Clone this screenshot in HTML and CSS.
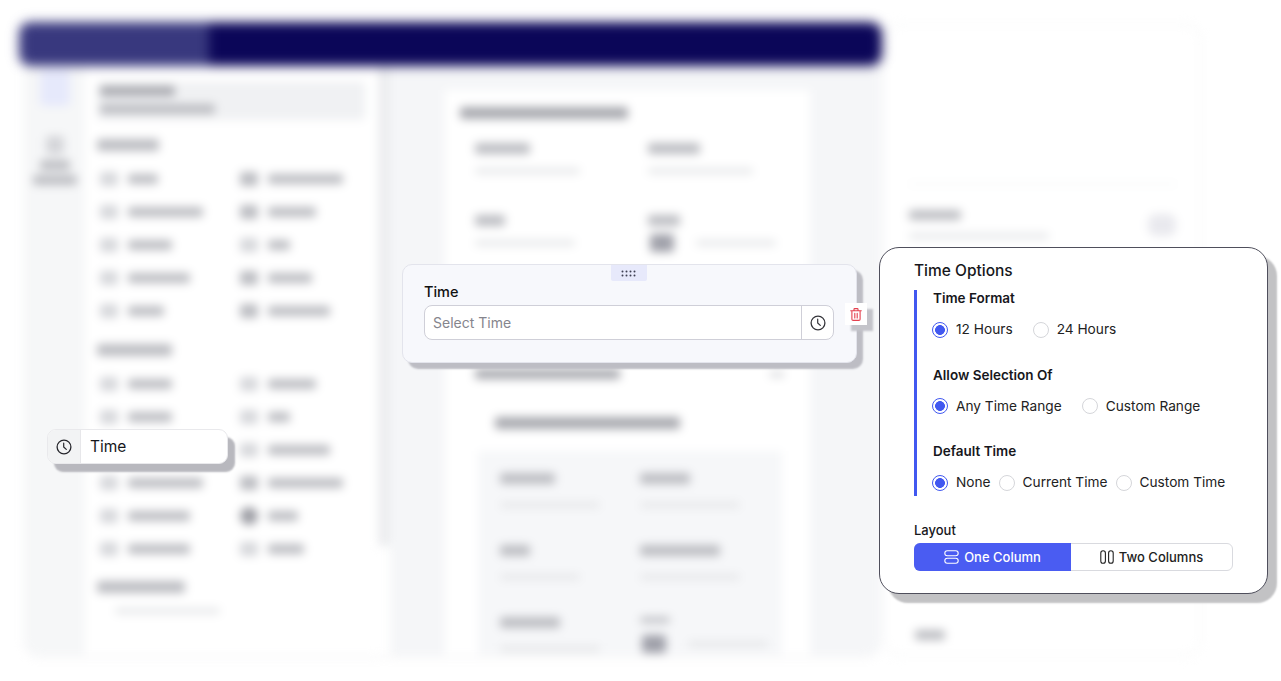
FILE: index.html
```html
<!DOCTYPE html>
<html lang="en">
<head>
<meta charset="utf-8">
<title>Time field</title>
<link rel="stylesheet" href="styles.css">
</head>
<body>
<svg class="defs" width="0" height="0" aria-hidden="true">
  <symbol id="clock" viewBox="0 0 16 16">
    <circle cx="8" cy="8" r="6.9" fill="none" stroke="currentColor" stroke-width="1.3"/>
    <path d="M7.7 4.2V8l2.6 2.4" fill="none" stroke="currentColor" stroke-width="1.2" stroke-linecap="round" stroke-linejoin="round"/>
  </symbol>
</svg>
<main class="stage">
  <div class="backdrop" aria-hidden="true">
    <div class="builder">
      <div class="topbar"><div class="topbar-brand"></div></div>
      <div class="workspace">
        <div class="rail">
          <div class="rail-top"></div>
          <div class="rail-icon"></div>
          <div class="bar w-30 rail-bar"></div>
          <div class="bar w-44 rail-bar2"></div>
        </div>
        <div class="palette">
          <div class="picked"><div class="bar dark w-75"></div><div class="bar w-115"></div></div>
          <div class="bar sec sec-first w-62"></div>
          <div class="rows">
            <div class="row"><i class="ic"></i><div class="bar w-30"></div></div>
            <div class="row"><i class="ic dk"></i><div class="bar w-75"></div></div>
            <div class="row"><i class="ic"></i><div class="bar w-75"></div></div>
            <div class="row"><i class="ic dk"></i><div class="bar w-48"></div></div>
            <div class="row"><i class="ic"></i><div class="bar w-44"></div></div>
            <div class="row"><i class="ic"></i><div class="bar w-22"></div></div>
            <div class="row"><i class="ic"></i><div class="bar w-62"></div></div>
            <div class="row"><i class="ic dk"></i><div class="bar w-44"></div></div>
            <div class="row"><i class="ic"></i><div class="bar w-36"></div></div>
            <div class="row"><i class="ic dk"></i><div class="bar w-62"></div></div>
          </div>
          <div class="bar sec w-75"></div>
          <div class="rows rows-b">
            <div class="row"><i class="ic"></i><div class="bar w-44"></div></div>
            <div class="row"><i class="ic"></i><div class="bar w-48"></div></div>
            <div class="row"><i class="ic"></i><div class="bar w-44"></div></div>
            <div class="row"><i class="ic"></i><div class="bar w-22"></div></div>
            <div class="row"><i class="ic"></i><div class="bar w-48"></div></div>
            <div class="row"><i class="ic"></i><div class="bar w-62"></div></div>
            <div class="row"><i class="ic"></i><div class="bar w-75"></div></div>
            <div class="row"><i class="ic dk"></i><div class="bar w-75"></div></div>
            <div class="row"><i class="ic"></i><div class="bar w-62"></div></div>
            <div class="row"><i class="ic round"></i><div class="bar w-30"></div></div>
            <div class="row"><i class="ic"></i><div class="bar w-62"></div></div>
            <div class="row"><i class="ic"></i><div class="bar w-36"></div></div>
          </div>
          <div class="bar sec sec-last w-88"></div>
          <div class="bar faint w-105 palette-foot"></div>
        </div>
        <div class="scroll"></div>
        <div class="canvas">
          <div class="form">
            <div class="bar dark form-title"></div>
            <div class="fields">
              <div class="field"><div class="bar w-55"></div><div class="bar faint w-105"></div></div>
              <div class="field"><div class="bar w-52"></div><div class="bar faint w-105"></div></div>
              <div class="field"><div class="bar w-30"></div><div class="bar faint w-100"></div></div>
              <div class="field"><div class="bar w-32"></div><div class="photo"><i></i><div class="bar faint w-80"></div></div></div>
            </div>
            <div class="section-head"><div class="bar dark w-145"></div><div class="chev"></div></div>
            <div class="bar dark sub-head"></div>
            <div class="inner">
              <div class="field"><div class="bar w-55"></div><div class="bar faint w-100"></div></div>
              <div class="field"><div class="bar w-50"></div><div class="bar faint w-100"></div></div>
              <div class="field"><div class="bar w-30"></div><div class="bar faint w-80"></div></div>
              <div class="field"><div class="bar w-80"></div><div class="bar faint w-100"></div></div>
              <div class="field"><div class="bar w-60"></div><div class="bar faint w-100"></div></div>
              <div class="field"><div class="bar w-30"></div><div class="photo"><i></i><div class="bar faint w-80"></div></div></div>
            </div>
          </div>
        </div>
      </div>
    </div>
    <div class="props">
      <div class="prop-rule"></div>
      <div class="prop-item">
        <div class="prop-text"><div class="bar w-52"></div><div class="bar faint w-140"></div></div>
        <div class="prop-toggle"></div>
      </div>
      <div class="prop-foot"><div class="bar w-30"></div></div>
    </div>
  </div>

  <div class="chip">
    <span class="chip-icon"><svg class="ico-16"><use href="#clock"/></svg></span>
    <span class="chip-label">Time</span>
  </div>

  <section class="field-card">
    <div class="handle">
      <svg width="16" height="7" viewBox="0 0 16 7" fill="#3d3f52">
        <circle cx="1.5" cy="1.5" r="1"/><circle cx="5.5" cy="1.5" r="1"/><circle cx="9.5" cy="1.5" r="1"/><circle cx="13.5" cy="1.5" r="1"/>
        <circle cx="1.5" cy="5.5" r="1"/><circle cx="5.5" cy="5.5" r="1"/><circle cx="9.5" cy="5.5" r="1"/><circle cx="13.5" cy="5.5" r="1"/>
      </svg>
    </div>
    <div class="card-label">Time</div>
    <div class="time-input">
      <span class="placeholder">Select Time</span>
      <span class="input-icon"><svg class="ico-16"><use href="#clock"/></svg></span>
    </div>
  </section>
  <div class="trash">
    <svg width="12" height="13" viewBox="0 0 12 13" fill="none" stroke="#e4414f" stroke-width="1.1" stroke-linecap="round" stroke-linejoin="round">
      <path d="M.7 2.7h10.6M4 2.6V1.2c0-.3.2-.6.6-.6h2.8c.4 0 .6.3.6.6v1.4M1.9 2.9v8.3c0 .7.5 1.2 1.2 1.2h5.8c.7 0 1.2-.5 1.2-1.2V2.9M4.8 5.4v4.6M7.2 5.4v4.6"/>
    </svg>
  </div>

  <aside class="options">
    <h2 class="opt-title">Time Options</h2>
    <div class="opt-groups">
      <div class="group">
        <h3 class="group-title">Time Format</h3>
        <div class="radios">
          <span class="radio on"></span><span class="r-text gap-wide">12 Hours</span>
          <span class="radio"></span><span class="r-text">24 Hours</span>
        </div>
      </div>
      <div class="group">
        <h3 class="group-title">Allow Selection Of</h3>
        <div class="radios">
          <span class="radio on"></span><span class="r-text gap-wide">Any Time Range</span>
          <span class="radio"></span><span class="r-text">Custom Range</span>
        </div>
      </div>
      <div class="group">
        <h3 class="group-title">Default Time</h3>
        <div class="radios">
          <span class="radio on"></span><span class="r-text gap-tight">None</span>
          <span class="radio"></span><span class="r-text gap-tight">Current Time</span>
          <span class="radio"></span><span class="r-text">Custom Time</span>
        </div>
      </div>
    </div>
    <div class="layout-label">Layout</div>
    <div class="segments">
      <div class="seg seg-on">
        <svg width="15" height="14" viewBox="0 0 15 14" fill="none" stroke="currentColor" stroke-width="1.1"><rect x=".8" y=".8" width="13.4" height="5" rx="2.5"/><rect x=".8" y="8.2" width="13.4" height="5" rx="2.5"/></svg>
        <span>One Column</span>
      </div>
      <div class="seg">
        <svg width="14" height="14" viewBox="0 0 14 14" fill="none" stroke="currentColor" stroke-width="1.1"><rect x=".8" y=".8" width="4.6" height="12.4" rx="2.3"/><rect x="8.6" y=".8" width="4.6" height="12.4" rx="2.3"/></svg>
        <span>Two Columns</span>
      </div>
    </div>
  </aside>
</main>
</body>
</html>
```
FILE: styles.css
```css
* { box-sizing: border-box; }
html, body { margin: 0; padding: 0; background: #fff; }
body { font-family: Inter, "Noto Sans", "Liberation Sans", sans-serif; color: #17171c; overflow: hidden; }
.defs { position: absolute; }
.stage { position: relative; width: 1281px; height: 681px; overflow: hidden; background: #fff; }

/* blurred application behind the overlays */
.backdrop { position: absolute; inset: 0; display: flex; align-items: flex-start; padding: 22px 0 0 25px; filter: blur(5px); }
.builder { width: 855px; height: 633px; display: flex; flex-direction: column; }
.topbar { height: 44px; margin-left: -6px; margin-right: -2px; flex: none; background: #0b0658; border-radius: 12px; overflow: hidden; filter: blur(3px); }
.topbar-brand { width: 190px; height: 100%; background: #38387e; }
.workspace { flex: 1; display: flex; min-height: 0; border-radius: 0 0 14px 14px; overflow: hidden; box-shadow: 0 2px 6px rgba(40, 40, 60, .05); }
.rail { width: 60px; flex: none; background: #f6f7f8; display: flex; flex-direction: column; align-items: center; padding-top: 4px; }
.rail-top { width: 30px; height: 36px; background: #e6e9fb; border-radius: 4px; }
.rail-icon { width: 18px; height: 18px; margin-top: 30px; background: #d4d5d9; border-radius: 3px; }
.rail-bar { margin-top: 6px; height: 7px; }
.rail-bar2 { margin-top: 5px; height: 7px; }
.palette { width: 293px; flex: none; background: #fff; padding: 16px 13px 0 12px; }
.picked { height: 38px; background: #f0f1f3; border-radius: 4px; padding: 4px 3px; display: flex; flex-direction: column; gap: 8px; }
.bar { height: 10px; background: #bcbdc2; border-radius: 3px; }
.bar.dark { background: #a8a9af; }
.bar.faint { height: 6px; background: #e6e7e9; }
.sec { height: 12px; margin-top: 17px; }
.sec-first { margin-top: 19px; }
.sec-last { margin-top: 16px; }
.rows { margin-top: 11px; display: grid; grid-template-columns: 140px 1fr; grid-auto-rows: 33px; }
.row { display: flex; align-items: center; gap: 10px; padding-left: 3px; }
.ic { width: 18px; height: 14px; background: #d6d7db; border-radius: 3px; flex: none; }
.ic.dk { background: #bbbcc1; }
.ic.round { height: 18px; border-radius: 50%; background: #9c9da4; }
.palette-foot { margin-top: 15px; margin-left: 18px; }
.scroll { width: 12px; flex: none; height: 480px; background: #ecedef; }
.canvas { flex: 1; min-width: 0; background: #f5f6f8; padding: 24px 70px 0 55px; }
.form { height: 100%; background: #fff; padding: 17px 28px 0 30px; }
.form-title { width: 168px; height: 12px; margin-left: -15px; }
.fields { margin-top: 24px; display: grid; grid-template-columns: 173px 1fr; row-gap: 41px; }
.field { display: flex; flex-direction: column; gap: 14px; }
.field .bar:first-child { height: 11px; }
.photo { display: flex; align-items: center; gap: 22px; margin: -6px 0 0 2px; }
.photo i { width: 24px; height: 18px; background: #a0a1aa; border-radius: 3px; }
.section-head { display: flex; align-items: center; justify-content: space-between; margin-top: 117px; }
.chev { width: 14px; height: 5px; background: #d5d6d9; margin-right: -2px; }
.sub-head { width: 185px; height: 12px; margin: 38px 0 0 20px; }
.inner { margin: 22px 0 0 3px; width: 304px; height: 210px; background: #f6f7f9; padding: 22px 0 0 22px; display: grid; grid-template-columns: 140px 1fr; grid-auto-rows: 36px; row-gap: 36px; }
.inner .field { gap: 18px; }
.props { width: 315px; height: 630px; margin: 3px 0 0 5px; background: #fff; border-radius: 16px; box-shadow: 0 0 0 1px #f3f4f4, 0 0 5px #f3f4f4; display: flex; flex-direction: column; padding: 0 24px; }
.prop-rule { height: 2px; background: #f4f5f5; margin-top: 158px; }
.prop-item { display: flex; justify-content: space-between; align-items: center; margin-top: 25px; }
.prop-text { display: flex; flex-direction: column; gap: 13px; }
.prop-toggle { width: 28px; height: 22px; background: #e9e9ee; border-radius: 8px; margin-right: 0; }
.prop-foot { margin-top: auto; padding: 0 0 15px 6px; }

.w-22 { width: 22px; } .w-30 { width: 30px; } .w-32 { width: 32px; } .w-36 { width: 36px; }
.w-44 { width: 44px; } .w-48 { width: 48px; } .w-50 { width: 50px; } .w-52 { width: 52px; }
.w-55 { width: 55px; } .w-60 { width: 60px; } .w-62 { width: 62px; } .w-75 { width: 75px; }
.w-80 { width: 80px; } .w-88 { width: 88px; } .w-100 { width: 100px; } .w-105 { width: 105px; }
.w-115 { width: 115px; } .w-140 { width: 140px; } .w-145 { width: 145px; }

/* sharp overlays */
.ico-16 { width: 16px; height: 16px; display: block; }
.chip { position: absolute; left: 47px; top: 429px; width: 181px; height: 35px; display: flex; background: #fff; border: 1px solid #e9e9ec; border-radius: 9px; box-shadow: 7px 8px 2px #b8b8be; }
.chip-icon { width: 33px; flex: none; display: flex; align-items: center; justify-content: center; background: #f2f3f4; border-right: 1px solid #e7e7ea; border-radius: 8px 0 0 8px; color: #26262c; }
.chip-label { padding-left: 9px; font-size: 15.5px; line-height: 33px; color: #17171c; }

.field-card { position: absolute; left: 402px; top: 264px; width: 455px; height: 99px; background: #f7f8fc; border: 1px solid #e3e4ec; border-radius: 10px; box-shadow: 6px 6px 2px #bdbdc4; padding: 18px 22px 0 21px; }
.handle { position: absolute; left: 208px; top: 0; width: 36px; height: 16px; display: flex; align-items: center; justify-content: center; background: #e7e9fb; border-radius: 0 0 2px 2px; }
.card-label { font-size: 14.5px; font-weight: 500; line-height: 17px; color: #111; }
.time-input { margin-top: 5px; height: 35px; display: flex; background: #fff; border: 1px solid #cfcfd8; border-radius: 8px; }
.placeholder { flex: 1; padding-left: 8px; font-size: 14px; line-height: 33px; color: #85858d; }
.input-icon { width: 32px; flex: none; display: flex; align-items: center; justify-content: center; border-left: 1px solid #cfcfd8; color: #34343a; }
.trash { position: absolute; left: 845px; top: 303px; width: 22px; height: 22px; display: flex; align-items: center; justify-content: center; background: #fff; box-shadow: 6px 6px 2px #c4c4ca; }

.options { position: absolute; left: 879px; top: 247px; width: 389px; height: 347px; background: #fff; border: 1px solid #4f4f5c; border-radius: 20px; box-shadow: 9px 9px 2px #c2c2c4; padding: 13px 34px 0; }
.opt-title { margin: 0; font-size: 15.5px; font-weight: 500; line-height: 20px; color: #17171c; }
.opt-groups { margin-top: 9px; height: 206px; border-left: 3px solid #4158f0; padding: 0 0 0 16px; display: flex; flex-direction: column; gap: 28.5px; }
.group-title { margin: 0; font-size: 13.5px; font-weight: 600; line-height: 16px; color: #17171c; }
.radios { margin: 15px 0 0 -1px; height: 17px; display: flex; align-items: center; }
.radio { width: 16px; height: 16px; flex: none; border-radius: 50%; border: 1px solid #d5d6da; background: #fff; margin-right: 8px; }
.radio.on { border-color: #4158f0; background: radial-gradient(circle, #4158f0 0 4.6px, #fff 5.2px); }
.r-text { font-size: 13.7px; line-height: 17px; color: #222; white-space: nowrap; }
.gap-wide { margin-right: 20px; }
.gap-tight { margin-right: 8px; }
.layout-label { margin-top: 26px; font-size: 13px; font-weight: 500; line-height: 16px; color: #17171c; }
.segments { margin-top: 5px; width: 319px; height: 28px; display: flex; border: 1px solid #d9dadf; border-radius: 6px; }
.seg { flex: 1; display: flex; align-items: center; justify-content: center; gap: 5px; font-size: 13px; font-weight: 500; color: #222; }
.seg-on { flex: none; width: 157px; margin: -1px 0 -1px -1px; background: #4a5cf2; color: #fff; border-radius: 6px 0 0 6px; }
```
